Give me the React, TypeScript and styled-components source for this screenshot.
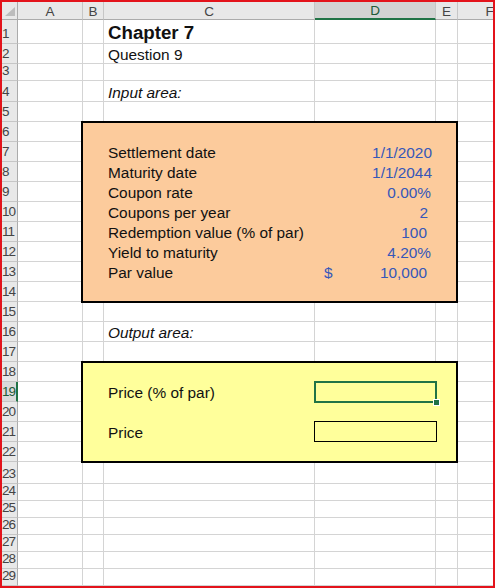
import React from "react";
import styled, { createGlobalStyle } from "styled-components";

const GlobalStyle = createGlobalStyle`
  html, body {
    margin: 0;
    padding: 0;
    background: #ffffff;
  }
  body {
    font-family: "Liberation Sans", Arial, sans-serif;
  }
`;

const COLUMNS = ["A", "B", "C", "D", "E", "F"];
const ROW_HEIGHTS = [
  24, 20, 17, 21, 20,
  ...Array(17).fill(20),
  22,
  ...Array(6).fill(17),
];

// spreadsheet coordinates -> css grid lines
const gr = (row: number) => row + 1;
const gc = (col: string) => COLUMNS.indexOf(col) + 2;

const Frame = styled.div`
  width: 495px;
  height: 588px;
  box-sizing: border-box;
  border: 2px solid #e3131b;
  overflow: hidden;
  background: #ffffff;
`;

const Sheet = styled.div`
  display: grid;
  grid-template-columns: 16px 65px 21px 211px 121px 22px 64px;
  grid-template-rows: 18px ${ROW_HEIGHTS.map((h) => `${h}px`).join(" ")};
  font-family: "Liberation Sans", Arial, sans-serif;
`;

const Corner = styled.div`
  grid-row: 1;
  grid-column: 1;
  background: #e8e8e8;
  border-right: 1px solid #ababab;
  border-bottom: 1px solid #ababab;
  box-sizing: border-box;
  display: flex;
  align-items: flex-end;
  justify-content: flex-end;
  padding: 0 2px 3px 0;
`;

const CornerMark = styled.span`
  width: 0;
  height: 0;
  border-left: 10px solid transparent;
  border-bottom: 9px solid #bcbcbc;
`;

const ColHead = styled.div<{ $c: number; $active?: boolean }>`
  grid-row: 1;
  grid-column: ${(p) => p.$c};
  box-sizing: border-box;
  background: ${(p) => (p.$active ? "#d3d3d3" : "#e8e8e8")};
  border-right: 1px solid #c6c6c6;
  border-bottom: ${(p) => (p.$active ? "2px solid #217346" : "1px solid #ababab")};
  display: flex;
  align-items: center;
  justify-content: center;
  padding-top: 1px;
  font-size: 13.5px;
  color: ${(p) => (p.$active ? "#215a38" : "#444444")};
`;

const RowHead = styled.div<{ $r: number; $active?: boolean }>`
  grid-row: ${(p) => p.$r};
  grid-column: 1;
  box-sizing: border-box;
  background: ${(p) => (p.$active ? "#dadada" : "#e8e8e8")};
  border-bottom: 1px solid #c6c6c6;
  border-right: ${(p) => (p.$active ? "2px solid #217346" : "1px solid #ababab")};
  display: flex;
  align-items: flex-end;
  padding: 0 0 2px 0;
  font-size: 13.5px;
  line-height: 15px;
  letter-spacing: -0.9px;
  color: ${(p) => (p.$active ? "#215a38" : "#444444")};
  overflow: hidden;
`;

const Cell = styled.div<{ $r: number; $c: number }>`
  grid-row: ${(p) => p.$r};
  grid-column: ${(p) => p.$c};
  border-right: 1px solid #d4d4d4;
  border-bottom: 1px solid #d4d4d4;
`;

const Panel = styled.div<{ $from: number; $to: number; $fill: string }>`
  grid-column: ${gc("B")} / ${gc("F")};
  grid-row: ${(p) => p.$from} / ${(p) => p.$to};
  z-index: 1;
  margin: -1px 0 -1px -2px;
  background: ${(p) => p.$fill};
  border: 2px solid #000000;
`;

const Text = styled.div<{
  $r: number;
  $c: number;
  $align?: "flex-start" | "flex-end" | "space-between";
  $padLeft?: number;
  $padRight?: number;
  $blue?: boolean;
  $title?: boolean;
  $italic?: boolean;
}>`
  grid-row: ${(p) => p.$r};
  grid-column: ${(p) => p.$c};
  z-index: 2;
  display: flex;
  align-items: flex-end;
  justify-content: ${(p) => p.$align ?? "flex-start"};
  padding: 0 ${(p) => p.$padRight ?? 4}px 1px ${(p) => p.$padLeft ?? 4}px;
  white-space: nowrap;
  font-size: ${(p) => (p.$title ? "18.7px" : "15.4px")};
  font-weight: ${(p) => (p.$title ? 700 : 400)};
  font-style: ${(p) => (p.$italic ? "italic" : "normal")};
  line-height: ${(p) => (p.$title ? "21px" : "17px")};
  color: ${(p) => (p.$blue ? "#3657b9" : "#111111")};
`;

const Selection = styled.div`
  grid-row: ${gr(19)};
  grid-column: ${gc("D")};
  z-index: 3;
  position: relative;
  margin: -1px;
  border: 2px solid #217346;
`;

const FillHandle = styled.span`
  position: absolute;
  right: -4px;
  bottom: -4px;
  width: 5px;
  height: 5px;
  background: #217346;
  box-shadow: 0 0 0 1px #ffffff;
`;

const OutputCell = styled.div`
  grid-row: ${gr(21)};
  grid-column: ${gc("D")};
  z-index: 3;
  margin: -1px -1px 0 -1px;
  border: 1px solid #000000;
`;

type Input = { label: string; value: string; pad: number; currency?: boolean };

const inputs: Input[] = [
  { label: "Settlement date", value: "1/1/2020", pad: 4 },
  { label: "Maturity date", value: "1/1/2044", pad: 4 },
  { label: "Coupon rate", value: "0.00%", pad: 5 },
  { label: "Coupons per year", value: "2", pad: 8 },
  { label: "Redemption value (% of par)", value: "100", pad: 9 },
  { label: "Yield to maturity", value: "4.20%", pad: 5 },
  { label: "Par value", value: "10,000", pad: 9, currency: true },
];

export default function App() {
  const rows = ROW_HEIGHTS.map((_, i) => i + 1);

  return (
    <>
      <GlobalStyle />
      <Frame>
        <Sheet>
          <Corner>
            <CornerMark />
          </Corner>
          {COLUMNS.map((c) => (
            <ColHead key={c} $c={gc(c)} $active={c === "D"}>
              {c}
            </ColHead>
          ))}
          {rows.map((r) => (
            <React.Fragment key={r}>
              <RowHead $r={gr(r)} $active={r === 19}>
                {r}
              </RowHead>
              {COLUMNS.map((c) => (
                <Cell key={c} $r={gr(r)} $c={gc(c)} />
              ))}
            </React.Fragment>
          ))}

          <Panel $from={gr(6)} $to={gr(15)} $fill="#fccb9c" />
          <Panel $from={gr(18)} $to={gr(23)} $fill="#ffff9b" />

          <Text $r={gr(1)} $c={gc("C")} $title>
            Chapter 7
          </Text>
          <Text $r={gr(2)} $c={gc("C")}>
            Question 9
          </Text>
          <Text $r={gr(4)} $c={gc("C")} $italic>
            Input area:
          </Text>

          {inputs.map((item, i) => (
            <React.Fragment key={item.label}>
              <Text $r={gr(7 + i)} $c={gc("C")}>
                {item.label}
              </Text>
              <Text
                $r={gr(7 + i)}
                $c={gc("D")}
                $blue
                $align={item.currency ? "space-between" : "flex-end"}
                $padLeft={item.currency ? 9 : 4}
                $padRight={item.pad}
              >
                {item.currency && <span>$</span>}
                <span>{item.value}</span>
              </Text>
            </React.Fragment>
          ))}

          <Text $r={gr(16)} $c={gc("C")} $italic>
            Output area:
          </Text>
          <Text $r={gr(19)} $c={gc("C")}>
            Price (% of par)
          </Text>
          <Text $r={gr(21)} $c={gc("C")}>
            Price
          </Text>

          <Selection>
            <FillHandle />
          </Selection>
          <OutputCell />
        </Sheet>
      </Frame>
    </>
  );
}
